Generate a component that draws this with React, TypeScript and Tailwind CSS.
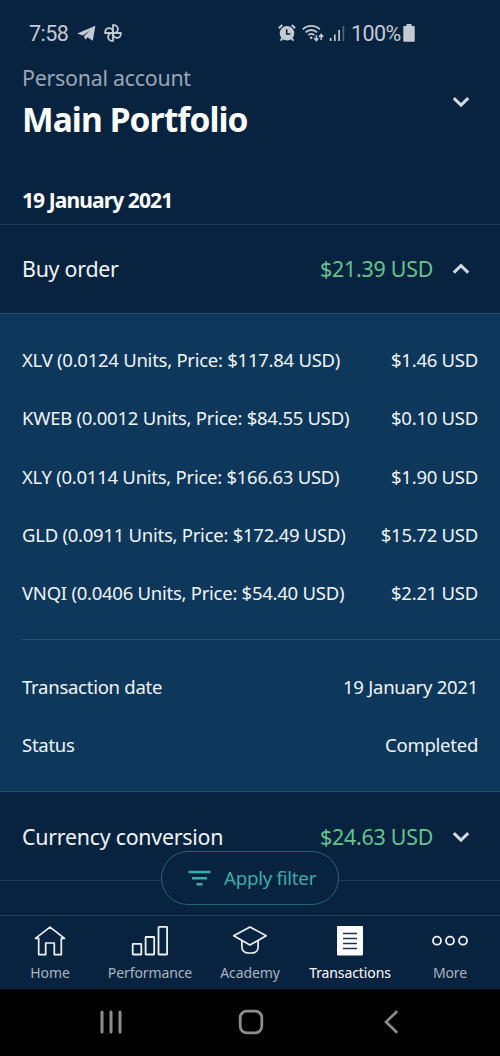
import type { ReactNode } from 'react'

interface Holding {
  symbol: string
  units: string
  price: string
  total: string
}

interface Tab {
  label: string
  icon: ReactNode
  active?: boolean
}

const holdings: Holding[] = [
  { symbol: 'XLV', units: '0.0124', price: '$117.84', total: '$1.46' },
  { symbol: 'KWEB', units: '0.0012', price: '$84.55', total: '$0.10' },
  { symbol: 'XLY', units: '0.0114', price: '$166.63', total: '$1.90' },
  { symbol: 'GLD', units: '0.0911', price: '$172.49', total: '$15.72' },
  { symbol: 'VNQI', units: '0.0406', price: '$54.40', total: '$2.21' },
]

function Chevron({ up = false }: { up?: boolean }) {
  return (
    <svg width="18" height="12" viewBox="0 0 18 12" fill="none" stroke="#d3d8e0" strokeWidth="3">
      <path d={up ? 'M1.8 9.6 9 2.6l7.2 7' : 'M1.8 2.1 9 9.1l7.2-7'} />
    </svg>
  )
}

function StatusBar() {
  return (
    <div className="flex h-[62px] items-center pt-[5px] pl-[29px] font-[Roboto,sans-serif] text-[21.5px] text-[#c3cad2]">
      <span className="w-[40px] pt-[2px] whitespace-nowrap tracking-[-0.5px]">7:58</span>
      <svg className="ml-[8px]" width="19" height="17" viewBox="0 0 19 17" fill="currentColor">
        <path d="M.3 8.6 18.4.8 15.8 15.8 10.6 12.2 8.2 14.8 7 11.2 12.6 5.8 5.8 10.6Z" />
      </svg>
      {/* pinwheel */}
      <svg className="ml-[8px]" width="18" height="18" viewBox="0 0 18 18" fill="none" stroke="currentColor" strokeWidth="1.8">
        <path d="M9 9V1.2h1a3.9 3.9 0 0 1 0 7.8Z" />
        <path d="M9 9h7.8v1A3.9 3.9 0 0 1 9 10Z" />
        <path d="M9 9v7.8H8A3.9 3.9 0 0 1 8 9Z" />
        <path d="M9 9H1.2V8A3.9 3.9 0 0 1 9 8Z" />
      </svg>
      {/* alarm */}
      <svg className="ml-[156px]" width="18" height="18" viewBox="0 0 18 18" fill="none" stroke="currentColor" strokeWidth="2">
        <circle cx="9" cy="9.3" r="7.3" fill="currentColor" stroke="none" />
        <path d="M.8 4.3 4.3 1.1M17.2 4.3 13.7 1.1M4.6 14.2 2.5 16.7M13.4 14.2l2.1 2.5" />
        <path d="M8.7 5.3v4.8h3.6" stroke="#08233f" strokeWidth="1.5" />
      </svg>
      {/* wifi with transfer arrows */}
      <svg className="ml-[6px]" width="22" height="18" viewBox="0 0 22 18" fill="none" stroke="currentColor" strokeWidth="1.8">
        <path d="M.8 5.3a12.2 12.2 0 0 1 17 0M3.6 8.4a8 8 0 0 1 11.4 0M6.3 11.2a4.2 4.2 0 0 1 6 0" />
        <circle cx="9.2" cy="13.8" r="1.3" fill="currentColor" stroke="none" />
        <path d="M14.3 11.2v5.3M12.2 14.2l2.1 2.5 2.1-2.5M19.2 16v-5.5M17.1 13l2.1-2.5 2.1 2.5" strokeWidth="1.5" />
      </svg>
      <svg className="ml-[5px]" width="16" height="18" viewBox="0 0 16 18" fill="none" stroke="currentColor" strokeWidth="1.7">
        <path d="M1.6 14v3M5.8 10.5V17M10.1 6v11" />
        <path d="M14.4 2v15" opacity=".4" />
      </svg>
      <span className="ml-[6px] w-[50px] pt-[2px] whitespace-nowrap tracking-[-0.6px]">100%</span>
      <svg className="ml-[2px]" width="12" height="18" viewBox="0 0 12 18" fill="currentColor">
        <path d="M3.5 0h5v2H11q.7 0 .7.7V17q0 .7-.7.7H1q-.7 0-.7-.7V2.7Q.3 2 1 2h2.5Z" />
      </svg>
    </div>
  )
}

function OrderRow({ title, amount, open }: { title: string; amount: string; open?: boolean }) {
  return (
    <div className="flex h-[88px] items-center pt-[1px] pr-[30px] pl-[22px] text-[21.4px] tracking-[-0.26px]">
      <span className="flex-1">{title}</span>
      <span className="mr-[19px] text-[#63c48c]">{amount} USD</span>
      <Chevron up={open} />
    </div>
  )
}

function DetailRow({ label, value }: { label: string; value: string }) {
  return (
    <div className="flex h-[58.3px] items-center justify-between whitespace-nowrap">
      <span>{label}</span>
      <span>{value}</span>
    </div>
  )
}

const tabs: Tab[] = [
  {
    label: 'Home',
    icon: (
      <svg width="32" height="32" viewBox="0 0 32 32" fill="none" stroke="#eef1f4" strokeWidth="1.7" strokeLinejoin="round">
        <path d="M16 2.2 30.5 13.4H27.3V29.6H20.3V18H11.7V29.6H4.7V13.4H1.5Z" />
      </svg>
    ),
  },
  {
    label: 'Performance',
    icon: (
      <svg width="38" height="32" viewBox="0 0 38 32" fill="none" stroke="#eef1f4" strokeWidth="1.8">
        <rect x="1.7" y="18.9" width="8.6" height="10.6" rx=".5" />
        <rect x="14.6" y="12" width="8.6" height="17.5" rx=".5" />
        <rect x="27.5" y="1.9" width="8.6" height="27.6" rx=".5" />
      </svg>
    ),
  },
  {
    label: 'Academy',
    icon: (
      <svg width="36" height="32" viewBox="0 0 36 32" fill="none" stroke="#eef1f4" strokeWidth="1.7" strokeLinejoin="round">
        <path d="M18 1.9 34.2 10.8 18 19.9 1.7 10.8Z" />
        <path d="M9.9 15.6v6.4c0 3.6 2.6 6 6.4 6h3.4c3.8 0 6.4-2.4 6.4-6v-6.4" />
      </svg>
    ),
  },
  {
    label: 'Transactions',
    active: true,
    icon: (
      <svg width="26" height="32" viewBox="0 0 26 32">
        <rect y="1" width="26" height="29.5" rx="1" fill="#fff" />
        <path d="M6 8.5h14M6 13.5h14M6 18.5h14M6 23.5h14" stroke="#1b3450" strokeWidth="1.7" />
      </svg>
    ),
  },
  {
    label: 'More',
    icon: (
      <svg width="38" height="32" viewBox="0 0 38 32" fill="none" stroke="#eef1f4" strokeWidth="1.8">
        <circle cx="6" cy="15.7" r="4" />
        <circle cx="19" cy="15.7" r="4" />
        <circle cx="32" cy="15.7" r="4" />
      </svg>
    ),
  },
]

function TabBar() {
  return (
    <nav className="grid h-[74px] grid-cols-5 border-t border-[#24405a] pt-[9px]">
      {tabs.map((tab) => (
        <div key={tab.label} className="flex flex-col items-center whitespace-nowrap">
          {tab.icon}
          <span
            className={
              tab.active
                ? 'mt-[6px] text-[14px] leading-5 tracking-[-0.1px] text-white'
                : 'mt-[6px] text-[14px] leading-5 tracking-[-0.1px] text-[#a9b4c0]'
            }
          >
            {tab.label}
          </span>
        </div>
      ))}
    </nav>
  )
}

function SystemNav() {
  return (
    <div className="flex h-[67px] items-center justify-between bg-black pr-[101px] pb-[2px] pl-[99px] text-[#8d8d8d]">
      <svg width="24" height="26" viewBox="0 0 24 26" stroke="currentColor" strokeWidth="3" strokeLinecap="round">
        <path d="M3 3v20M12 3v20M21 3v20" />
      </svg>
      <svg className="mr-[6px]" width="26" height="26" viewBox="0 0 26 26" fill="none" stroke="currentColor" strokeWidth="2.8">
        <rect x="2.2" y="2.2" width="21.6" height="21.6" rx="6.5" />
      </svg>
      <svg width="15" height="26" viewBox="0 0 15 26" fill="none" stroke="currentColor" strokeWidth="2.6">
        <path d="M13.2 2.2 2 13l11.2 10.8" />
      </svg>
    </div>
  )
}

export default function App() {
  return (
    <div className="flex h-[1056px] w-[500px] flex-col overflow-hidden bg-[#08233f] font-['Noto_Sans',sans-serif] text-[#f1f4f6]">
      <StatusBar />

      <header className="flex h-[118px] justify-between pr-[30px] pl-[22px]">
        <div>
          <p className="text-[21.4px] leading-[31px] tracking-[-0.26px] text-[#9aa7b5]">Personal account</p>
          <h1 className="mt-[4px] text-[33.5px] leading-[44px] font-bold tracking-[-0.9px] text-white">Main Portfolio</h1>
        </div>
        <div className="pt-[34px]">
          <Chevron />
        </div>
      </header>

      <h2 className="h-[45px] border-b border-[#223c56] pl-[22px] text-[21px] leading-[40px] font-bold tracking-[-0.9px] text-white">
        19 January 2021
      </h2>

      <OrderRow title="Buy order" amount="$21.39" open />

      <section className="h-[480px] border-y border-[#235075] bg-[#0d385b] px-[22px] pt-[17px] text-[18.5px] tracking-[-0.26px]">
        {holdings.map((h) => (
          <DetailRow
            key={h.symbol}
            label={`${h.symbol} (${h.units} Units, Price: ${h.price} USD)`}
            value={`${h.total} USD`}
          />
        ))}
        <hr className="-mr-[22px] mt-[17px] mb-[17.5px] border-[#2a5270]" />
        <DetailRow label="Transaction date" value="19 January 2021" />
        <DetailRow label="Status" value="Completed" />
      </section>

      <div className="relative h-[123px]">
        <div className="border-b border-[#223c56]">
          <OrderRow title="Currency conversion" amount="$24.63" />
        </div>
        {/* floats over the list */}
        <button className="absolute top-[59px] left-[161px] flex h-[54px] w-[178px] items-center rounded-full border border-[#22667a] bg-[#08233f] pl-[26px] text-[18.8px] tracking-[-0.3px] text-[#3dabab]">
          <svg width="23" height="16" viewBox="0 0 23 16" stroke="currentColor" strokeWidth="2.6">
            <path d="M.5 2h22M4 8.2h15M8.5 14.3h6" />
          </svg>
          <span className="ml-[13px] whitespace-nowrap">Apply filter</span>
        </button>
      </div>

      <TabBar />
      <SystemNav />
    </div>
  )
}
